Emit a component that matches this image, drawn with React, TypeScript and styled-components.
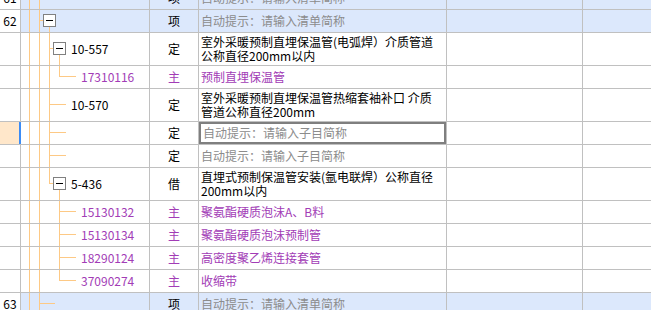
import React from "react";
import styled, { createGlobalStyle } from "styled-components";

const LINE = "#c0c0c0";
const ORANGE = "#fdc985";
const PURPLE = "#a23cb6";
const HINT = "#8c8c8c";
const BAND = "#dce8fc";

const GlobalStyle = createGlobalStyle`
  html, body { margin: 0; padding: 0; background: #fff; }
  body {
    font-family: "Noto Sans CJK SC", "Liberation Sans", sans-serif;
    font-size: 12px;
    color: #000;
  }
`;

type Tone = "dark" | "purple" | "hint";
const toneColor = (t: Tone) => (t === "purple" ? PURPLE : t === "hint" ? HINT : "#000");

const Viewport = styled.div`
  width: 651px;
  height: 310px;
  overflow: hidden;
`;

const Sheet = styled.div`
  margin-top: -13px;
  display: flex;
  flex-direction: column;
`;

const Row = styled.div<{ $h: number; $band?: boolean }>`
  display: grid;
  grid-template-columns: 21px 129px 49px 248px 136px 1fr;
  height: ${(p) => p.$h + 1}px;
  box-sizing: border-box;
  border-bottom: 1px solid ${LINE};
  background: ${(p) => (p.$band ? BAND : "#fff")};
`;

const Cell = styled.div`
  box-sizing: border-box;
  border-right: 1px solid ${LINE};
  display: flex;
  align-items: center;
  overflow: hidden;
  min-width: 0;
`;

const NumCell = styled(Cell)<{ $selected?: boolean }>`
  justify-content: center;
  background: ${(p) => (p.$selected ? "#ffe7ca" : "#fff")};
  border-right: ${(p) => (p.$selected ? "2px solid #3b8cf6" : `1px solid ${LINE}`)};
  line-height: 14px;
`;

const CodeCell = styled(Cell)<{ $tone: Tone }>`
  align-items: stretch;
  color: ${(p) => toneColor(p.$tone)};
`;

const CodeText = styled.span`
  align-self: center;
  white-space: nowrap;
  line-height: 14px;
`;

const TypeCell = styled(Cell)<{ $tone: Tone }>`
  justify-content: center;
  color: ${(p) => toneColor(p.$tone)};
  line-height: 14px;
`;

const NameCell = styled(Cell)<{ $tone: Tone }>`
  padding-left: 2px;
  color: ${(p) => toneColor(p.$tone)};
  white-space: pre;
  line-height: 14px;
`;

const EditCell = styled(Cell)`
  align-items: stretch;
`;

const EditBox = styled.div`
  flex: 1;
  box-sizing: border-box;
  border: 2px solid #7f7f7f;
  padding-left: 2px;
  display: flex;
  align-items: center;
  color: ${HINT};
  white-space: pre;
  line-height: 14px;
`;

const BlankCell = styled(Cell)``;
const LastCell = styled(Cell)`
  border-right: none;
`;

const TreeSvg = styled.svg`
  flex-shrink: 0;
  display: block;
`;

type Tree = {
  width: number;
  full?: number[];
  half?: number[];
  h?: [number, number];
  box?: number;
};

function Connectors({ t, height }: { t: Tree; height: number }) {
  const mid = Math.floor((height - 1) / 2) + 0.5;
  return (
    <TreeSvg width={t.width} height={height} shapeRendering="crispEdges">
      {(t.full || []).map((x) => (
        <line key={"f" + x} x1={x + 0.5} x2={x + 0.5} y1={0} y2={height} stroke={ORANGE} />
      ))}
      {(t.half || []).map((x) => (
        <line key={"h" + x} x1={x + 0.5} x2={x + 0.5} y1={0} y2={mid + 0.5} stroke={ORANGE} />
      ))}
      {t.h && <line x1={t.h[0]} x2={t.h[1]} y1={mid} y2={mid} stroke={ORANGE} />}
      {t.box !== undefined && (
        <g>
          <line x1={t.box + 0.5} x2={t.box + 0.5} y1={mid + 6} y2={height} stroke={ORANGE} />
          <rect x={t.box - 5.5} y={mid - 6} width={12} height={12} fill="#fff" stroke="#808080" />
          <line x1={t.box - 3} x2={t.box + 4} y1={mid} y2={mid} stroke="#000" />
        </g>
      )}
    </TreeSvg>
  );
}

type RowData = {
  num?: string;
  code?: string;
  type: string;
  name: string;
  tone: Tone;
  tall?: boolean;
  band?: boolean;
  selected?: boolean;
  tree: Tree;
};

const BILL_HINT = "自动提示：请输入清单简称";
const NORM_HINT = "自动提示：请输入子目简称";

const rows: RowData[] = [
  { num: "61", type: "项", name: BILL_HINT, tone: "hint", band: true, tree: { width: 35, full: [8, 18] } },
  { num: "62", type: "项", name: BILL_HINT, tone: "hint", band: true, tree: { width: 35, full: [8, 18], h: [18, 28], box: 28 } },
  {
    code: "10-557",
    type: "定",
    name: "室外采暖预制直埋保温管(电弧焊）介质管道\n公称直径200mm以内",
    tone: "dark",
    tall: true,
    tree: { width: 50, full: [8, 18, 28], h: [28, 38], box: 38 },
  },
  { code: "17310116", type: "主", name: "预制直埋保温管", tone: "purple", tree: { width: 60, full: [8, 18, 28], half: [38], h: [38, 55] } },
  {
    code: "10-570",
    type: "定",
    name: "室外采暖预制直埋保温管热缩套袖补口 介质\n管道公称直径200mm",
    tone: "dark",
    tall: true,
    tree: { width: 50, full: [8, 18, 28], h: [28, 45] },
  },
  { type: "定", name: NORM_HINT, tone: "hint", selected: true, tree: { width: 50, full: [8, 18, 28], h: [28, 45] } },
  { type: "定", name: NORM_HINT, tone: "hint", tree: { width: 50, full: [8, 18, 28], h: [28, 45] } },
  {
    code: "5-436",
    type: "借",
    name: "直埋式预制保温管安装(氩电联焊）公称直径\n200mm以内",
    tone: "dark",
    tall: true,
    tree: { width: 50, full: [8, 18], half: [28], h: [28, 38], box: 38 },
  },
  { code: "15130132", type: "主", name: "聚氨酯硬质泡沫A、B料", tone: "purple", tree: { width: 60, full: [8, 18, 38], h: [38, 55] } },
  { code: "15130134", type: "主", name: "聚氨酯硬质泡沫预制管", tone: "purple", tree: { width: 60, full: [8, 18, 38], h: [38, 55] } },
  { code: "18290124", type: "主", name: "高密度聚乙烯连接套管", tone: "purple", tree: { width: 60, full: [8, 18, 38], h: [38, 55] } },
  { code: "37090274", type: "主", name: "收缩带", tone: "purple", tree: { width: 60, full: [8, 18], half: [38], h: [38, 55] } },
  { num: "63", type: "项", name: BILL_HINT, tone: "hint", band: true, tree: { width: 35, full: [8, 18], h: [18, 34] } },
];

export default function App() {
  return (
    <>
      <GlobalStyle />
      <Viewport>
        <Sheet>
          {rows.map((r, i) => {
            const h = r.tall ? 32 : 22;
            const codeTone: Tone = r.tone === "purple" ? "purple" : "dark";
            const typeTone: Tone = r.tone === "purple" ? "purple" : "dark";
            return (
              <Row key={i} $h={h} $band={r.band}>
                <NumCell $selected={r.selected}>{r.num}</NumCell>
                <CodeCell $tone={codeTone}>
                  <Connectors t={r.tree} height={h} />
                  {r.code && <CodeText>{r.code}</CodeText>}
                </CodeCell>
                <TypeCell $tone={typeTone}>{r.type}</TypeCell>
                {r.selected ? (
                  <EditCell>
                    <EditBox>{r.name}</EditBox>
                  </EditCell>
                ) : (
                  <NameCell $tone={r.tone}>{r.name}</NameCell>
                )}
                <BlankCell />
                <LastCell />
              </Row>
            );
          })}
        </Sheet>
      </Viewport>
    </>
  );
}
